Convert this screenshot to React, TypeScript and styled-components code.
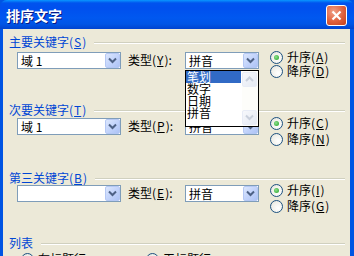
import React from "react";
import styled, { createGlobalStyle } from "styled-components";

const Global = createGlobalStyle`
  html, body { margin: 0; padding: 0; background: #ece9d8; overflow: hidden; }
  #root { width: 354px; height: 256px; }
`;

const FONT = `"Noto Sans CJK SC", "Noto Sans", sans-serif`;

const Window = styled.div`
  width: 354px;
  height: 256px;
  overflow: hidden;
  display: flex;
  flex-direction: column;
  font-family: ${FONT};
  font-size: 12px;
  color: #000;
  background: #0054e3;
`;

const TitleBar = styled.div`
  height: 29px;
  flex: none;
  display: flex;
  align-items: center;
  justify-content: space-between;
  padding: 0 6px 0 6px;
  background: linear-gradient(
    to bottom,
    #0997ff 0px,
    #0053ee 3px,
    #0050ee 8px,
    #0058f0 18px,
    #0055e6 24px,
    #0043cf 29px
  );
  border-radius: 7px 7px 0 0;
`;

const Title = styled.div`
  color: #fff;
  font-weight: bold;
  font-size: 14px;
  text-shadow: 1px 1px 0 #0a1883;
  line-height: 16px;
  margin-top: 1px;
`;

const CloseButton = styled.div`
  width: 19px;
  height: 19px;
  border: 1px solid #fff;
  border-radius: 3px;
  background: radial-gradient(circle at 35% 30%, #f0a088 0%, #e0603c 55%, #c2401c 100%);
  display: flex;
  align-items: center;
  justify-content: center;
  margin-right: 1px;
  margin-top: 1px;
`;

const Frame = styled.div`
  flex: 1;
  display: flex;
  padding: 0 4px 0 3px;
  background: #0054e3;
  min-height: 0;
`;

const Body = styled.div`
  flex: 1;
  background: #ece9d8;
  padding: 6px 5px 0 6px;
  display: flex;
  flex-direction: column;
`;

const Group = styled.div<{ $mt: number }>`
  margin-top: ${(p) => p.$mt}px;
  display: flex;
  flex-direction: column;
`;

const GroupHeader = styled.div`
  display: flex;
  align-items: center;
  gap: 8px;
  height: 14px;
`;

const GroupLabel = styled.span`
  color: #0046d5;
  line-height: 14px;
  white-space: nowrap;
`;

const Rule = styled.div`
  flex: 1;
  height: 0;
  border-top: 1px solid #d0d0bf;
  border-bottom: 1px solid #fff;
  margin-top: 2px;
`;

const U = styled.span`
  text-decoration: underline;
  padding: 0 1px;
`;

const ControlsRow = styled.div<{ $mt: number }>`
  margin-top: ${(p) => p.$mt}px;
  padding-left: 8px;
  display: flex;
  align-items: flex-start;
`;

const ComboWrap = styled.div`
  position: relative;
`;

const ComboBox = styled.div<{ $w: number }>`
  width: ${(p) => p.$w}px;
  height: 17px;
  box-sizing: border-box;
  border: 1px solid #7f9db9;
  background: #fff;
  display: flex;
  align-items: center;
  padding-left: 3px;
  line-height: 14px;
`;

const ComboText = styled.span`
  flex: 1;
  white-space: nowrap;
`;

const DropButton = styled.div<{ $disabled?: boolean }>`
  width: 15px;
  height: 15px;
  box-sizing: border-box;
  border: 1px solid ${(p) => (p.$disabled ? "#e8ecf6" : "#b5c8f4")};
  border-radius: 2px;
  background: ${(p) =>
    p.$disabled
      ? "linear-gradient(135deg, #f7f8fb, #e4e9f3)"
      : "linear-gradient(135deg, #dce7fd 0%, #c3d4fb 50%, #adc3f5 100%)"};
  display: flex;
  align-items: center;
  justify-content: center;
  flex: none;
`;

const FieldLabel = styled.span`
  width: 50px;
  margin: 1px 7px 0 7px;
  line-height: 14px;
  white-space: nowrap;
`;

const RadioCol = styled.div<{ $gap: number }>`
  margin-left: 11px;
  margin-top: -2px;
  display: flex;
  flex-direction: column;
  gap: ${(p) => p.$gap}px;
`;

const RadioRow = styled.div`
  display: flex;
  align-items: center;
  gap: 4px;
  height: 14px;
  line-height: 14px;
  white-space: nowrap;
`;

const RadioCircle = styled.div<{ $on?: boolean }>`
  width: 13px;
  height: 13px;
  box-sizing: border-box;
  border-radius: 50%;
  border: 1px solid #1c5180;
  background: radial-gradient(circle at 65% 65%, #ffffff 0%, #f0f0ea 60%, #d8d8cf 100%);
  display: flex;
  align-items: center;
  justify-content: center;
  flex: none;
  &::after {
    content: "";
    display: ${(p) => (p.$on ? "block" : "none")};
    width: 5px;
    height: 5px;
    border-radius: 50%;
    background: radial-gradient(circle at 40% 40%, #8ee08e, #21a121);
  }
`;

const DropList = styled.div`
  position: absolute;
  left: 0;
  top: 18px;
  width: 74px;
  height: 57px;
  box-sizing: border-box;
  border: 1px solid #000;
  background: #fff;
  display: flex;
  z-index: 2;
`;

const ListItems = styled.div`
  flex: 1;
  display: flex;
  flex-direction: column;
`;

const ListItem = styled.div<{ $sel?: boolean }>`
  height: 12px;
  line-height: 12px;
  font-size: 12px;
  padding-left: 1px;
  margin-right: 1px;
  background: ${(p) => (p.$sel ? "#316ac5" : "transparent")};
  color: ${(p) => (p.$sel ? "#fff" : "#000")};
  white-space: nowrap;
`;

const ScrollBar = styled.div`
  width: 16px;
  display: flex;
  flex-direction: column;
  justify-content: space-between;
  background: #fdfdfa;
  padding: 1px 0;
`;

const BottomRow = styled.div`
  margin-top: 2px;
  padding-left: 12px;
  display: flex;
  gap: 60px;
`;

function Chevron({ color, down = true }: { color: string; down?: boolean }) {
  return (
    <svg width="9" height="7" viewBox="0 0 9 7">
      <path
        d={down ? "M1 1.5 L4.5 5 L8 1.5" : "M1 5 L4.5 1.5 L8 5"}
        fill="none"
        stroke={color}
        strokeWidth="2"
      />
    </svg>
  );
}

function Combo({ w, text }: { w: number; text: string }) {
  return (
    <ComboBox $w={w}>
      <ComboText>{text}</ComboText>
      <DropButton>
        <Chevron color="#4d6185" />
      </DropButton>
    </ComboBox>
  );
}

function Radio({ on, children }: { on?: boolean; children: React.ReactNode }) {
  return (
    <RadioRow>
      <RadioCircle $on={on} />
      <span>{children}</span>
    </RadioRow>
  );
}

type GroupDef = {
  title: string;
  key: string;
  mt: number;
  rowMt: number;
  gap: number;
  first: string;
  typeKey: string;
  up: string;
  down: string;
  open?: boolean;
};

const groups: GroupDef[] = [
  { title: "主要关键字", key: "S", mt: 0, rowMt: 3, gap: 0, first: "域 1", typeKey: "Y", up: "A", down: "D", open: true },
  { title: "次要关键字", key: "T", mt: 25, rowMt: 1, gap: 2, first: "域 1", typeKey: "P", up: "C", down: "N" },
  { title: "第三关键字", key: "B", mt: 25, rowMt: 0, gap: 2, first: "", typeKey: "E", up: "I", down: "G" },
];

export default function App() {
  return (
    <>
      <Global />
      <Window>
        <TitleBar>
          <Title>排序文字</Title>
          <CloseButton>
            <svg width="11" height="11" viewBox="0 0 11 11">
              <path d="M1.5 1.5 L9.5 9.5 M9.5 1.5 L1.5 9.5" stroke="#fff" strokeWidth="2.2" />
            </svg>
          </CloseButton>
        </TitleBar>
        <Frame>
          <Body>
            {groups.map((g) => (
              <Group key={g.key} $mt={g.mt}>
                <GroupHeader>
                  <GroupLabel>
                    {g.title}(<U>{g.key}</U>)
                  </GroupLabel>
                  <Rule />
                </GroupHeader>
                <ControlsRow $mt={g.rowMt}>
                  <Combo w={104} text={g.first} />
                  <FieldLabel>
                    类型(<U>{g.typeKey}</U>):
                  </FieldLabel>
                  <ComboWrap>
                    <Combo w={74} text="拼音" />
                    {g.open && (
                      <DropList>
                        <ListItems>
                          <ListItem $sel>笔划</ListItem>
                          <ListItem>数字</ListItem>
                          <ListItem>日期</ListItem>
                          <ListItem>拼音</ListItem>
                        </ListItems>
                        <ScrollBar>
                          <DropButton $disabled>
                            <Chevron color="#c9d0dc" down={false} />
                          </DropButton>
                          <DropButton $disabled>
                            <Chevron color="#c9d0dc" />
                          </DropButton>
                        </ScrollBar>
                      </DropList>
                    )}
                  </ComboWrap>
                  <RadioCol $gap={g.gap}>
                    <Radio on>
                      升序(<U>{g.up}</U>)
                    </Radio>
                    <Radio>
                      降序(<U>{g.down}</U>)
                    </Radio>
                  </RadioCol>
                </ControlsRow>
              </Group>
            ))}
            <Group $mt={23}>
              <GroupHeader>
                <GroupLabel>列表</GroupLabel>
                <Rule />
              </GroupHeader>
              <BottomRow>
                <Radio>有标题行</Radio>
                <Radio>无标题行</Radio>
              </BottomRow>
            </Group>
          </Body>
        </Frame>
      </Window>
    </>
  );
}
